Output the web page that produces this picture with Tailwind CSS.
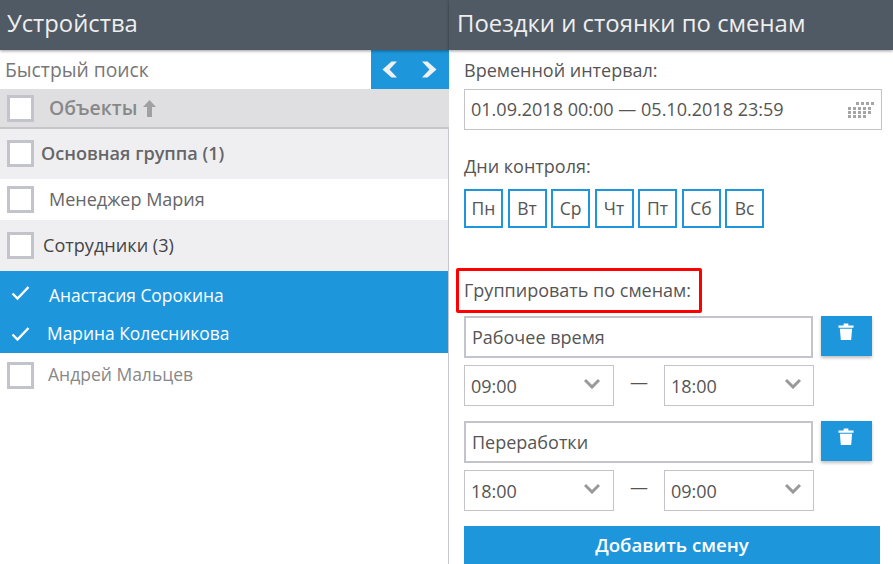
<!DOCTYPE html>
<html lang="ru">
<head>
    <meta charset="UTF-8">
    <title>Поездки и стоянки по сменам</title>
    <script src="https://cdn.jsdelivr.net/npm/@tailwindcss/browser@4"></script>
</head>
<body class="bg-white w-[893px] h-[564px] overflow-hidden font-['Open_Sans',sans-serif] text-[#555]">
    <div class="flex h-[564px]">
        <!-- Devices -->
        <div class="w-[449px] shrink-0 flex flex-col">
            <div class="h-[50px] shrink-0 bg-[#505a64] text-[#eee] text-[23.8px] leading-[46px] pl-[7px] shadow-[0_1px_3px_rgba(0,0,0,0.4)] relative">Устройства</div>
            <div class="h-[39px] shrink-0 flex">
                <div class="w-[371px] pl-[5px] text-[19.3px] leading-[39px] text-[#777]">Быстрый поиск</div>
                <div class="w-[78px] bg-[#1e96dc] flex items-center justify-between pl-[11px] pr-[12px]">
                    <svg width="16" height="17" viewBox="0 0 16 17"><path d="M15 0.5 L7.5 8.5 L15 16.5 H9.5 L0.5 8.5 L9.5 0.5 Z" fill="#f0f0f0"/></svg>
                    <svg width="16" height="17" viewBox="0 0 16 17"><path d="M1 0.5 L8.5 8.5 L1 16.5 H6.5 L15.5 8.5 L6.5 0.5 Z" fill="#f0f0f0"/></svg>
                </div>
            </div>
            <div class="h-[40px] shrink-0 bg-[#dfdfe1] border-b-2 border-[#c5c5ca] flex items-center pl-[7px]">
                <span class="w-[27px] h-[27px] bg-white border-[3px] border-[#c3c3cb]"></span>
                <span class="ml-[15px] text-[19.4px] font-semibold text-[#888]">Объекты</span>
                <svg class="ml-[5px]" width="15" height="19" viewBox="0 0 15 19"><path d="M7.5 1 L14 8 H10 V18 H5 V8 H1 Z" fill="#a0a0a0"/></svg>
            </div>
            <div class="flex-1 border-r border-[#c8c8ce] flex flex-col">
                <div class="h-[50px] bg-[#efeff2] flex items-start pt-[11px] pl-[7px]">
                    <span class="w-[27px] h-[27px] bg-white border-[3px] border-[#c3c3cb]"></span>
                    <span class="ml-[7px] text-[18.1px] leading-[26px] font-semibold text-[#666]">Основная группа (1)</span>
                </div>
                <div class="h-[41px] bg-white flex items-center pl-[7px]">
                    <span class="w-[27px] h-[27px] bg-white border-[3px] border-[#c3c3cb]"></span>
                    <span class="ml-[15px] text-[18px] text-[#666]">Менеджер Мария</span>
                </div>
                <div class="h-[51px] bg-[#efeff2] flex items-start pt-[12px] pl-[7px]">
                    <span class="w-[27px] h-[27px] bg-white border-[3px] border-[#c3c3cb]"></span>
                    <span class="ml-[9px] text-[18.1px] leading-[26px] font-medium text-[#444]">Сотрудники (3)</span>
                </div>
                <div class="h-[82px] bg-[#1e96dc] text-white text-[17.4px] flex flex-col">
                    <div class="h-[49px] flex items-center pl-[11px]">
                        <svg class="-mt-[5px]" width="19" height="16" viewBox="0 0 19 16"><path d="M1.5 8.5 L6.5 13.5 L17.5 2" fill="none" stroke="#fff" stroke-width="2.4"/></svg>
                        <span class="ml-[19px]">Анастасия Сорокина</span>
                    </div>
                    <div class="h-[26px] flex items-center pl-[11px]">
                        <svg class="mt-[2px]" width="19" height="16" viewBox="0 0 19 16"><path d="M1.5 8.5 L6.5 13.5 L17.5 2" fill="none" stroke="#fff" stroke-width="2.4"/></svg>
                        <span class="ml-[17px]">Марина Колесникова</span>
                    </div>
                </div>
                <div class="h-[42px] bg-white flex items-start pt-[9px] pl-[7px]">
                    <span class="w-[27px] h-[27px] bg-white border-[3px] border-[#c3c3cb]"></span>
                    <span class="ml-[14px] -mt-[1px] text-[17.5px] leading-[26px] text-[#888]">Андрей Мальцев</span>
                </div>
            </div>
        </div>

        <!-- Report settings -->
        <div class="flex-1 flex flex-col">
            <div class="h-[50px] shrink-0 bg-[#505a64] text-[#eee] text-[23.9px] leading-[46px] pl-[8px] shadow-[0_1px_3px_rgba(0,0,0,0.4)] relative whitespace-nowrap">Поездки и стоянки по сменам</div>
            <div class="pl-[15px] flex flex-col">
                <div class="mt-[7px] h-[26px] text-[18px] leading-[26px]">Временной интервал:</div>
                <div class="mt-[6px] w-[418px] h-[41px] border border-[#c3c3cb] flex items-center justify-between pl-[6px] pr-[7px] text-[18.05px]">
                    <span class="mt-[1px]">01.09.2018 00:00 — 05.10.2018 23:59</span>
                    <svg width="27" height="18" viewBox="0 0 27 18" fill="#a5a5a5">
                        <rect x="9" y="1" width="3" height="3"/><rect x="14" y="1" width="3" height="3"/><rect x="19" y="1" width="3" height="3"/><rect x="24" y="1" width="3" height="3"/>
                        <rect x="1" y="6" width="3" height="3"/><rect x="6" y="6" width="3" height="3"/><rect x="11" y="6" width="3" height="3"/><rect x="16" y="6" width="3" height="3"/><rect x="21" y="6" width="3" height="3"/>
                        <rect x="1" y="10" width="3" height="3"/><rect x="6" y="10" width="3" height="3"/><rect x="11" y="10" width="3" height="3"/><rect x="16" y="10" width="3" height="3"/><rect x="21" y="10" width="3" height="3"/>
                        <rect x="1" y="14" width="3" height="3"/><rect x="6" y="14" width="3" height="3"/><rect x="11" y="14" width="3" height="3"/><rect x="16" y="14" width="3" height="3"/>
                    </svg>
                </div>
                <div class="mt-[23px] h-[26px] text-[18px] leading-[26px]">Дни контроля:</div>
                <div class="mt-[10px] flex gap-[4.5px] text-[17.5px]">
                    <span class="w-[39px] h-[39px] border-2 border-[#1e96dc] flex items-center justify-center">Пн</span>
                    <span class="w-[39px] h-[39px] border-2 border-[#1e96dc] flex items-center justify-center">Вт</span>
                    <span class="w-[39px] h-[39px] border-2 border-[#1e96dc] flex items-center justify-center">Ср</span>
                    <span class="w-[39px] h-[39px] border-2 border-[#1e96dc] flex items-center justify-center">Чт</span>
                    <span class="w-[39px] h-[39px] border-2 border-[#1e96dc] flex items-center justify-center">Пт</span>
                    <span class="w-[39px] h-[39px] border-2 border-[#1e96dc] flex items-center justify-center">Сб</span>
                    <span class="w-[39px] h-[39px] border-2 border-[#1e96dc] flex items-center justify-center">Вс</span>
                </div>
                <div class="mt-[40px] -ml-[8px] w-[246px] h-[45px] border-[3px] border-[#f00] rounded-[2px] pl-[5px] text-[18px] leading-[39px]">Группировать по сменам:</div>

                <!-- Shift 1 -->
                <div class="mt-[3px] flex items-start">
                    <div class="w-[349px] h-[42px] border-2 border-[#c3c3cb] pl-[6px] text-[18px] leading-[38px]">Рабочее время</div>
                    <div class="ml-[8px] w-[51px] h-[40px] bg-[#1e96dc] flex items-start justify-center pt-[7px] pr-[2px] shadow-[0_2px_3px_rgba(0,0,0,0.25)]">
                        <svg width="16" height="18" viewBox="0 0 17 19"><path d="M6 2.5 V0.5 H11 V2.5 H16.5 V5 H0.5 V2.5 Z M2 6 H15 L14 18 H3 Z" fill="#fff"/></svg>
                    </div>
                </div>
                <div class="mt-[7px] flex items-center">
                    <div class="w-[150px] h-[41px] border border-[#c3c3cb] flex items-center justify-between pl-[6px] pr-[13px] text-[18px]">
                        <span class="mt-[1px]">09:00</span>
                        <svg class="-mt-[5px]" width="16" height="11" viewBox="0 0 16 11"><path d="M1 2 L8 9 L15 2" fill="none" stroke="#999" stroke-width="3"/></svg>
                    </div>
                    <span class="w-[50px] text-center text-[18px] -mt-[6px]">—</span>
                    <div class="w-[150px] h-[41px] border border-[#c3c3cb] flex items-center justify-between pl-[6px] pr-[12px] text-[18px]">
                        <span class="mt-[1px]">18:00</span>
                        <svg class="-mt-[5px]" width="16" height="11" viewBox="0 0 16 11"><path d="M1 2 L8 9 L15 2" fill="none" stroke="#999" stroke-width="3"/></svg>
                    </div>
                </div>

                <!-- Shift 2 -->
                <div class="mt-[15px] flex items-start">
                    <div class="w-[349px] h-[42px] border-2 border-[#c3c3cb] pl-[6px] text-[18px] leading-[38px]">Переработки</div>
                    <div class="ml-[8px] w-[51px] h-[40px] bg-[#1e96dc] flex items-start justify-center pt-[7px] pr-[2px] shadow-[0_2px_3px_rgba(0,0,0,0.25)]">
                        <svg width="16" height="18" viewBox="0 0 17 19"><path d="M6 2.5 V0.5 H11 V2.5 H16.5 V5 H0.5 V2.5 Z M2 6 H15 L14 18 H3 Z" fill="#fff"/></svg>
                    </div>
                </div>
                <div class="mt-[7px] flex items-center">
                    <div class="w-[150px] h-[41px] border border-[#c3c3cb] flex items-center justify-between pl-[6px] pr-[13px] text-[18px]">
                        <span class="mt-[1px]">18:00</span>
                        <svg class="-mt-[5px]" width="16" height="11" viewBox="0 0 16 11"><path d="M1 2 L8 9 L15 2" fill="none" stroke="#999" stroke-width="3"/></svg>
                    </div>
                    <span class="w-[50px] text-center text-[18px] -mt-[6px]">—</span>
                    <div class="w-[150px] h-[41px] border border-[#c3c3cb] flex items-center justify-between pl-[6px] pr-[12px] text-[18px]">
                        <span class="mt-[1px]">09:00</span>
                        <svg class="-mt-[5px]" width="16" height="11" viewBox="0 0 16 11"><path d="M1 2 L8 9 L15 2" fill="none" stroke="#999" stroke-width="3"/></svg>
                    </div>
                </div>
                <div class="mt-[15px] w-[416px] h-[38px] bg-[#1e96dc] text-white text-center text-[18.7px] font-semibold leading-[38px]">Добавить смену</div>
            </div>
        </div>
    </div>
</body>
</html>
